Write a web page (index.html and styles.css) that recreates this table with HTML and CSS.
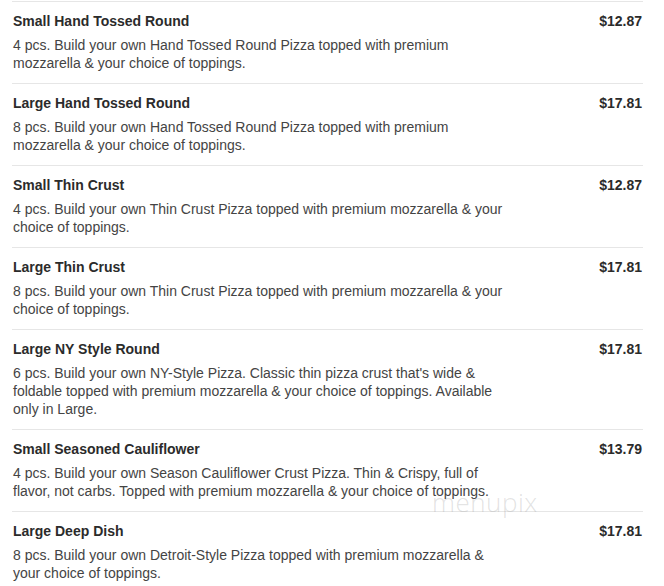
FILE: index.html
```html
<!DOCTYPE html>
<html>
<head>
<meta charset="utf-8">
<link rel="stylesheet" href="styles.css">
</head>
<body>
<div class="menu">
  <div class="item">
    <div class="info">
      <div class="name">Small Hand Tossed Round</div>
      <div class="desc">4 pcs. Build your own Hand Tossed Round Pizza topped with premium<br>mozzarella &amp; your choice of toppings.</div>
    </div>
    <div class="price">$12.87</div>
  </div>
  <div class="item">
    <div class="info">
      <div class="name">Large Hand Tossed Round</div>
      <div class="desc">8 pcs. Build your own Hand Tossed Round Pizza topped with premium<br>mozzarella &amp; your choice of toppings.</div>
    </div>
    <div class="price">$17.81</div>
  </div>
  <div class="item">
    <div class="info">
      <div class="name">Small Thin Crust</div>
      <div class="desc">4 pcs. Build your own Thin Crust Pizza topped with premium mozzarella &amp; your<br>choice of toppings.</div>
    </div>
    <div class="price">$12.87</div>
  </div>
  <div class="item">
    <div class="info">
      <div class="name">Large Thin Crust</div>
      <div class="desc">8 pcs. Build your own Thin Crust Pizza topped with premium mozzarella &amp; your<br>choice of toppings.</div>
    </div>
    <div class="price">$17.81</div>
  </div>
  <div class="item">
    <div class="info">
      <div class="name">Large NY Style Round</div>
      <div class="desc">6 pcs. Build your own NY-Style Pizza. Classic thin pizza crust that's wide &amp;<br>foldable topped with premium mozzarella &amp; your choice of toppings. Available<br>only in Large.</div>
    </div>
    <div class="price">$17.81</div>
  </div>
  <div class="item">
    <div class="info">
      <div class="name">Small Seasoned Cauliflower</div>
      <div class="desc">4 pcs. Build your own Season Cauliflower Crust Pizza. Thin &amp; Crispy, full of<br>flavor, not carbs. Topped with premium mozzarella &amp; your choice of toppings.</div>
    </div>
    <div class="price">$13.79</div>
  </div>
  <div class="item">
    <div class="info">
      <div class="name">Large Deep Dish</div>
      <div class="desc">8 pcs. Build your own Detroit-Style Pizza topped with premium mozzarella &amp;<br>your choice of toppings.</div>
    </div>
    <div class="price">$17.81</div>
  </div>
  <div class="watermark">menupix</div>
</div>
</body>
</html>
```
FILE: styles.css
```css
html, body {
  margin: 0;
  padding: 0;
  background: #fff;
}
body {
  font-family: "Liberation Sans", Arial, sans-serif;
  color: #333;
}
.menu {
  position: relative;
  margin: 1px 21px 0 12px;
}
.item {
  display: flex;
  justify-content: space-between;
  align-items: flex-start;
  border-top: 1px solid #e6e6e6;
  padding: 10px 1px 11px 1px;
}
.name {
  font-weight: bold;
  font-size: 14px;
  line-height: 18px;
  color: #2b2b2b;
}
.desc {
  margin-top: 6px;
  font-size: 14px;
  line-height: 18px;
  color: #444;
}
.price {
  font-weight: bold;
  font-size: 14px;
  line-height: 18px;
  color: #2b2b2b;
}
.watermark {
  position: absolute;
  left: 420px;
  top: 483px;
  font-size: 26px;
  font-weight: 300;
  font-family: "Open Sans", sans-serif;
  color: rgba(160, 160, 160, 0.3);
  letter-spacing: 0.5px;
}
```
